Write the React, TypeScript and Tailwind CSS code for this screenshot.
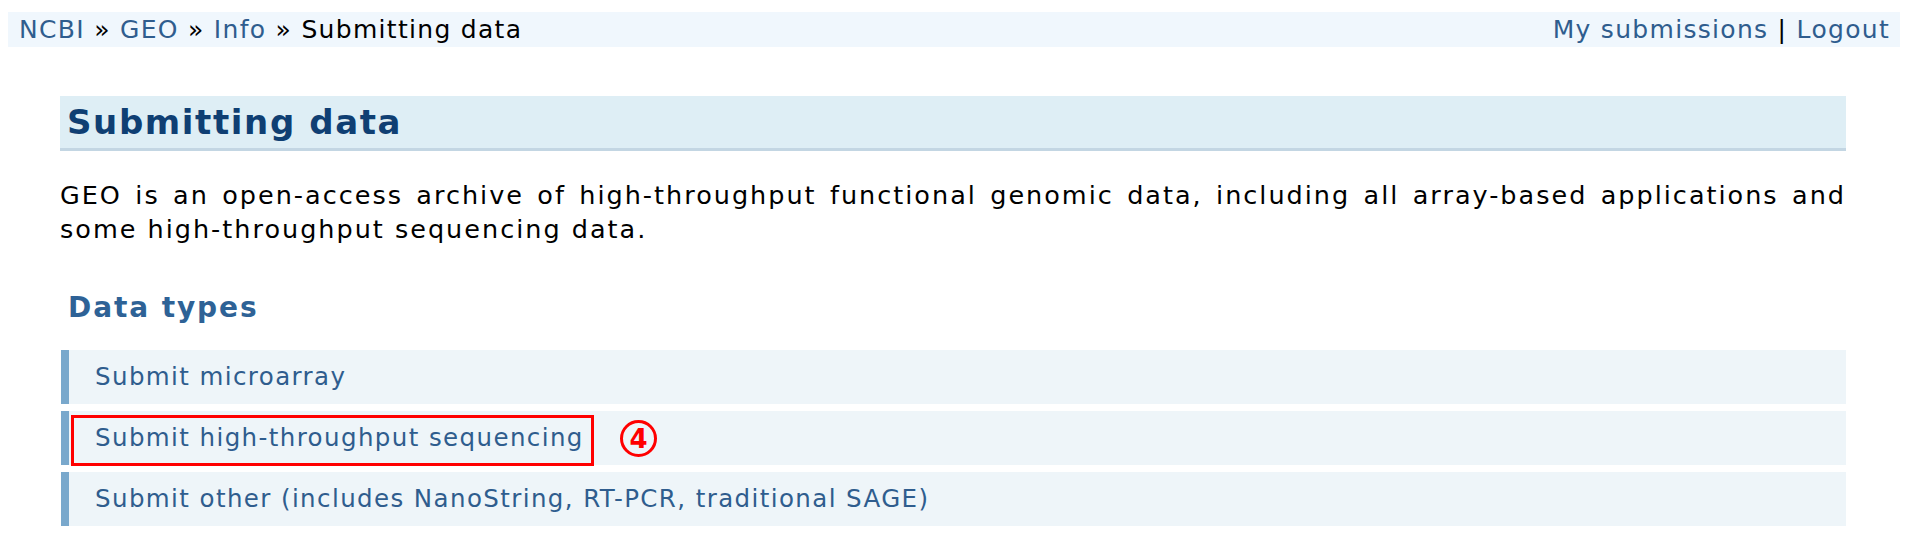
import React from "react";

const font = { fontFamily: '"DejaVu Sans", Verdana, sans-serif' };

function Row({ children, annotated }: { children: React.ReactNode; annotated?: boolean }) {
  return (
    <div className="relative ml-px flex h-[54px] items-center border-l-[8px] border-[#79a8cc] bg-[#eef5f9] pl-[26px]">
      <a className="text-[24.5px] tracking-[1.4px] text-[#2f5d8e] leading-none">{children}</a>
      {annotated && (
        <>
          <div className="absolute left-[2px] top-[4px] h-[51px] w-[523px] border-[3px] border-[#ff0000]" />
          <div className="absolute left-[551px] top-[9px] flex h-[37px] w-[37px] items-center justify-center rounded-full border-[3px] border-[#ff0000] text-[26px] font-bold leading-none text-[#ff0000]">
            4
          </div>
        </>
      )}
    </div>
  );
}

export default function App() {
  return (
    <div className="min-h-[549px] bg-white pt-[12px]" style={font}>
      <div className="mx-[8px] flex h-[35px] items-center justify-between bg-[#f0f7fd] pl-[11px] pr-[10px] text-[25px] tracking-[1.3px] leading-none">
        <div>
          <a className="text-[#2f5d8e]">NCBI</a>
          <span className="text-black"> » </span>
          <a className="text-[#2f5d8e]">GEO</a>
          <span className="text-black"> » </span>
          <a className="text-[#2f5d8e]">Info</a>
          <span className="text-black"> » Submitting data</span>
        </div>
        <div>
          <a className="text-[#2f5d8e]">My submissions</a>
          <span className="text-black"> | </span>
          <a className="text-[#2f5d8e]">Logout</a>
        </div>
      </div>

      <div className="ml-[60px] mr-[62px]">
        <div className="mt-[49px] flex h-[55px] items-center border-b-[3px] border-[#c3d6e3] bg-[#deeef5] pl-[7px]">
          <h1 className="text-[34px] font-bold leading-none tracking-[1.6px] text-[#0f3f73]">Submitting data</h1>
        </div>

        <p className="mt-[27px] text-justify text-[25.5px] leading-[34px] tracking-[2px] text-black">
          GEO is an open-access archive of high-throughput functional genomic data, including all array-based applications and some high-throughput sequencing data.
        </p>

        <h2 className="mt-[44px] pl-[8px] text-[28px] font-bold leading-[36px] tracking-[1.9px] text-[#2e6296]">Data types</h2>

        <div className="mt-[24px] flex flex-col gap-[7px]">
          <Row>Submit microarray</Row>
          <Row annotated>Submit high-throughput sequencing</Row>
          <Row>Submit other (includes NanoString, RT-PCR, traditional SAGE)</Row>
        </div>
      </div>
    </div>
  );
}
